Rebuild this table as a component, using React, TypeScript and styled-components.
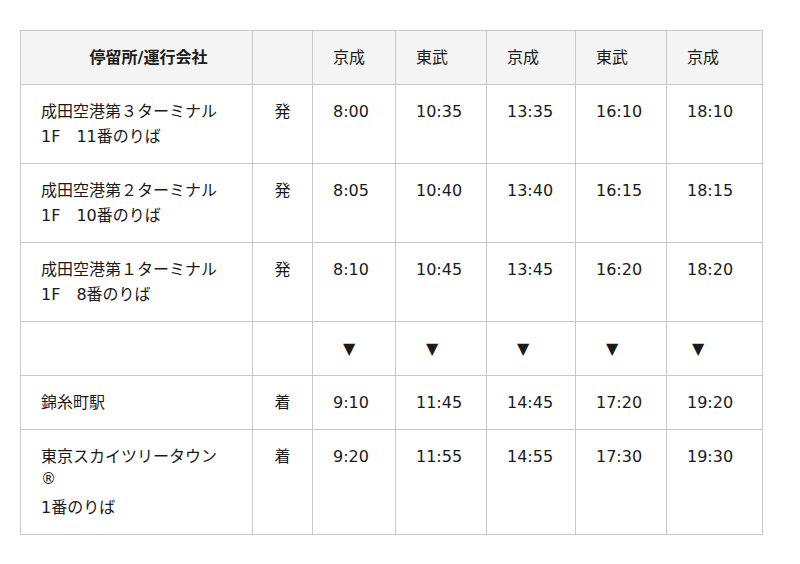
import React from 'react'
import styled, { createGlobalStyle } from 'styled-components'

const GlobalStyle = createGlobalStyle`
    body {
        margin: 0;
        background: #fff;
        color: #1a1a1a;
        font-family: "DejaVu Sans", "Noto Sans CJK JP", sans-serif;
    }
`

interface StopRow {
    name: string[];
    mark: string;
    times: string[];
}

const companies = ["京成", "東武", "京成", "東武", "京成"]
const widths = [232, 60, 83, 91, 89, 91, 96]

const departures: StopRow[] = [
    { name: ["成田空港第３ターミナル", "1F　11番のりば"], mark: "発", times: ["8:00", "10:35", "13:35", "16:10", "18:10"] },
    { name: ["成田空港第２ターミナル", "1F　10番のりば"], mark: "発", times: ["8:05", "10:40", "13:40", "16:15", "18:15"] },
    { name: ["成田空港第１ターミナル", "1F　8番のりば"], mark: "発", times: ["8:10", "10:45", "13:45", "16:20", "18:20"] },
]

const arrivals: StopRow[] = [
    { name: ["錦糸町駅"], mark: "着", times: ["9:10", "11:45", "14:45", "17:20", "19:20"] },
    { name: ["東京スカイツリータウン", "®", "1番のりば"], mark: "着", times: ["9:20", "11:55", "14:55", "17:30", "19:30"] },
]

const Row: React.FC<{ row: StopRow }> = ({ row }) => (
    <tr>
        <Cell>
            {row.name.map((line, i) => (
                <React.Fragment key={i}>
                    {i > 0 && <br />}
                    {line === "®" ? <Reg>®</Reg> : line}
                </React.Fragment>
            ))}
        </Cell>
        <MarkCell>{row.mark}</MarkCell>
        {row.times.map((t, i) => <Cell key={i}>{t}</Cell>)}
    </tr>
)

const App: React.FC = () => {
    return (
        <Page>
            <GlobalStyle />
            <Timetable>
                <colgroup>
                    {widths.map((w, i) => <col key={i} width={w} />)}
                </colgroup>
                <thead>
                    <tr>
                        <StopHead>停留所/運行会社</StopHead>
                        <Head />
                        {companies.map((c, i) => <Head key={i}>{c}</Head>)}
                    </tr>
                </thead>
                <tbody>
                    {departures.map((r, i) => <Row key={i} row={r} />)}
                    <tr>
                        <Cell />
                        <Cell />
                        {companies.map((_, i) => (
                            <Cell key={i}>
                                <Arrow $indent={i === companies.length - 1 ? 5 : 10}>▼</Arrow>
                            </Cell>
                        ))}
                    </tr>
                    {arrivals.map((r, i) => <Row key={i} row={r} />)}
                </tbody>
            </Timetable>
        </Page>
    )
}

export default App

const Page = styled.div`
    padding: 30px 20px 30px 20px;
`

const Timetable = styled.table`
    width: 742px;
    table-layout: fixed;
    border-collapse: collapse;
    font-size: 16px;
    line-height: 25px;
    border: 1px solid #dcdcdc;
`

const Head = styled.th`
    background-color: #f4f4f4;
    border: 1px solid #c8c8c8;
    padding: 14px 20px;
    text-align: left;
    font-weight: normal;
    vertical-align: middle;
`

const StopHead = styled(Head)`
    text-align: center;
    font-weight: bold;
    padding-left: 44px;
`

const Cell = styled.td`
    border: 1px solid #c8c8c8;
    padding: 14px 20px;
    text-align: left;
    vertical-align: top;
    white-space: nowrap;
`

const MarkCell = styled(Cell)`
    text-align: center;
`

const Arrow = styled.span<{ $indent: number }>`
    display: inline-block;
    margin-left: ${props => props.$indent}px;
`

const Reg = styled.span`
    position: relative;
    top: -3px;
    font-size: 15px;
`
